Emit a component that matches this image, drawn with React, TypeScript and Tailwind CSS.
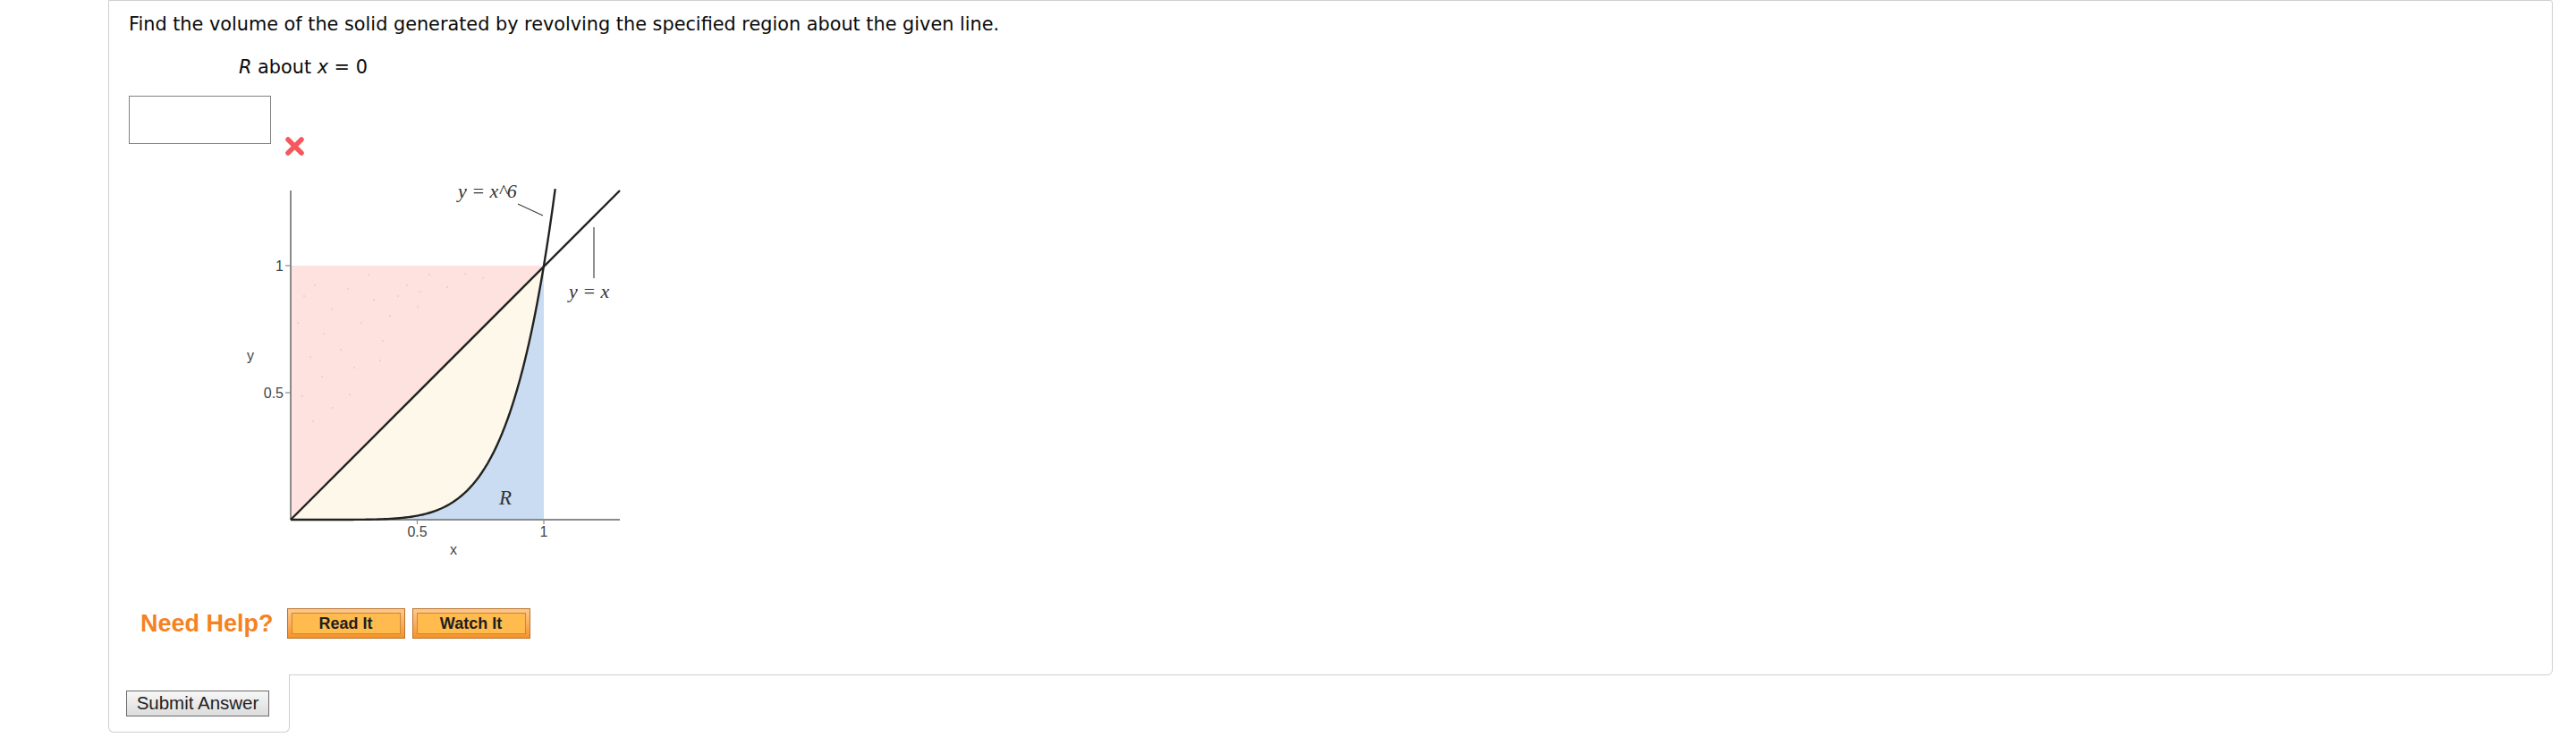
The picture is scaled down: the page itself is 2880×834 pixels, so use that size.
import { FC } from 'react'

const X0 = 325
const Y0 = 580
const SX = 283
const SY = 284

const px = (x: number) => X0 + SX * x
const py = (y: number) => Y0 - SY * y

const curve = (from: number, to: number, steps = 80) => {
  const pts: string[] = []
  for (let i = 0; i <= steps; i++) {
    const x = from + ((to - from) * i) / steps
    pts.push(`${px(x).toFixed(2)},${py(Math.pow(x, 6)).toFixed(2)}`)
  }
  return pts
}

const dots = [
  [340, 330], [352, 318], [371, 345], [389, 322], [404, 360], [362, 372], [418, 334],
  [436, 352], [347, 398], [381, 390], [396, 410], [428, 380], [455, 318], [467, 342],
  [338, 442], [360, 420], [412, 306], [480, 306], [350, 470], [372, 455], [445, 330],
  [500, 320], [520, 305], [333, 360], [391, 440], [425, 402], [470, 325], [540, 310],
]

const Graph: FC = (): JSX.Element => {
  const up = curve(0, 1)
  const full = curve(0, 1.045, 90)
  const down = [...up].reverse()

  return (
    <svg width="460" height="440" viewBox="250 190 460 440" className="block">
      <polygon points={`${px(0)},${py(0)} ${px(0)},${py(1)} ${px(1)},${py(1)}`} fill="#fde2df" />
      {dots.map(([x, y], i) => (
        <circle key={i} cx={x} cy={y} r="0.9" fill="#c9c9c9" opacity="0.7" />
      ))}
      <polygon points={`${px(0)},${py(0)} ${px(1)},${py(1)} ${down.join(' ')}`} fill="#fef8ea" />
      <polygon points={`${up.join(' ')} ${px(1)},${py(0)}`} fill="#c9dcf1" />

      {/* axes */}
      <line x1={X0} y1={212} x2={X0} y2={Y0} stroke="#8a8a8a" strokeWidth="2" />
      <line x1={X0} y1={Y0} x2={693} y2={Y0} stroke="#8a8a8a" strokeWidth="2" />
      <line x1={319} y1={py(1)} x2={X0} y2={py(1)} stroke="#8a8a8a" strokeWidth="1.2" />
      <line x1={319} y1={py(0.5)} x2={X0} y2={py(0.5)} stroke="#8a8a8a" strokeWidth="1.2" />
      <line x1={px(0.5)} y1={Y0} x2={px(0.5)} y2={Y0 + 5} stroke="#8a8a8a" strokeWidth="1.2" />
      <line x1={px(1)} y1={Y0} x2={px(1)} y2={Y0 + 5} stroke="#8a8a8a" strokeWidth="1.2" />

      <g fill="#444" fontFamily="'Liberation Sans', Arial, sans-serif" fontSize="16">
        <text x="317" y={py(1) + 6} textAnchor="end">1</text>
        <text x="317" y={py(0.5) + 6} textAnchor="end">0.5</text>
        <text x="280" y="402" textAnchor="middle">y</text>
        <text x={px(0.5)} y="599" textAnchor="middle">0.5</text>
        <text x={px(1)} y="599" textAnchor="middle">1</text>
        <text x="507" y="619" textAnchor="middle">x</text>
      </g>

      {/* curves */}
      <line x1={X0} y1={Y0} x2={693} y2={212} stroke="#222" strokeWidth="2.4" />
      <polyline points={full.join(' ')} fill="none" stroke="#222" strokeWidth="2.4" />

      {/* labels */}
      <line x1="579" y1="227" x2="607" y2="240" stroke="#444" strokeWidth="1.3" />
      <line x1="664" y1="253" x2="664" y2="310" stroke="#555" strokeWidth="1.3" />
      <g fill="#333" fontFamily="'Liberation Serif', 'Times New Roman', serif" fontStyle="italic" fontSize="22">
        <text x="512" y="220">y = x^6</text>
        <text x="636" y="332">y = x</text>
        <text x="558" y="563" fontSize="23">R</text>
      </g>
    </svg>
  )
}

const HelpButton: FC<{ label: string }> = ({ label }): JSX.Element => {
  return (
    <button className="w-[132px] h-[34px] border border-[#b8732f] bg-linear-to-b from-[#ffc98a] to-[#f7921f] p-[4px]">
      <span className="flex items-center justify-center h-full border border-[#c7883c] bg-[#ffbb4e] text-[18px] font-bold text-[#1e1e1e] font-['Liberation_Sans',Arial,sans-serif]">
        {label}
      </span>
    </button>
  )
}

const App: FC = (): JSX.Element => {
  return (
    <div className="min-h-[834px] bg-white pl-[121px] pr-[26px] font-['DejaVu_Sans',Verdana,sans-serif] text-[#0a0a0a]">
      <div className="border border-[#cfcfcf] rounded-br-[6px] rounded-tr-[3px] pl-[22px] pt-[13px] pb-[40px]">
        <p className="text-[20.8px] leading-[26px]">
          Find the volume of the solid generated by revolving the specified region about the given line.
        </p>
        <p className="mt-[22px] ml-[123px] text-[20.8px] leading-[26px]">
          <i>R</i> about <i>x</i> = 0
        </p>
        <div className="mt-[19px] flex items-start">
          <input type="text" className="w-[159px] h-[54px] border border-[#808080] bg-white outline-none" />
          <svg width="23" height="23" viewBox="0 0 23 23" className="ml-[15px] mt-[45px]">
            <path d="M4 4 L19 19 M19 4 L4 19" stroke="#f4585d" strokeWidth="5.5" strokeLinecap="round" />
          </svg>
        </div>
        <div className="mt-[16px] ml-[106px]">
          <Graph />
        </div>
        <div className="mt-[49px] flex items-center">
          <span className="ml-[13px] mr-[15px] text-[27px] leading-[34px] font-bold text-[#f5821f] font-['Liberation_Sans',Arial,sans-serif]">
            Need Help?
          </span>
          <div className="flex gap-[8px]">
            <HelpButton label="Read It" />
            <HelpButton label="Watch It" />
          </div>
        </div>
      </div>
      <div className="-mt-px w-[203px] h-[65px] bg-white border border-t-0 border-[#cfcfcf] rounded-b-[6px] pt-[18px] pl-[19px]">
        <button className="w-[160px] h-[29px] border border-[#6b6b6b] bg-linear-to-b from-[#f7f7f7] to-[#dcdcdc] text-[20.5px] leading-none text-[#222] font-['Liberation_Sans',Arial,sans-serif]">
          Submit Answer
        </button>
      </div>
    </div>
  )
}

export default App
